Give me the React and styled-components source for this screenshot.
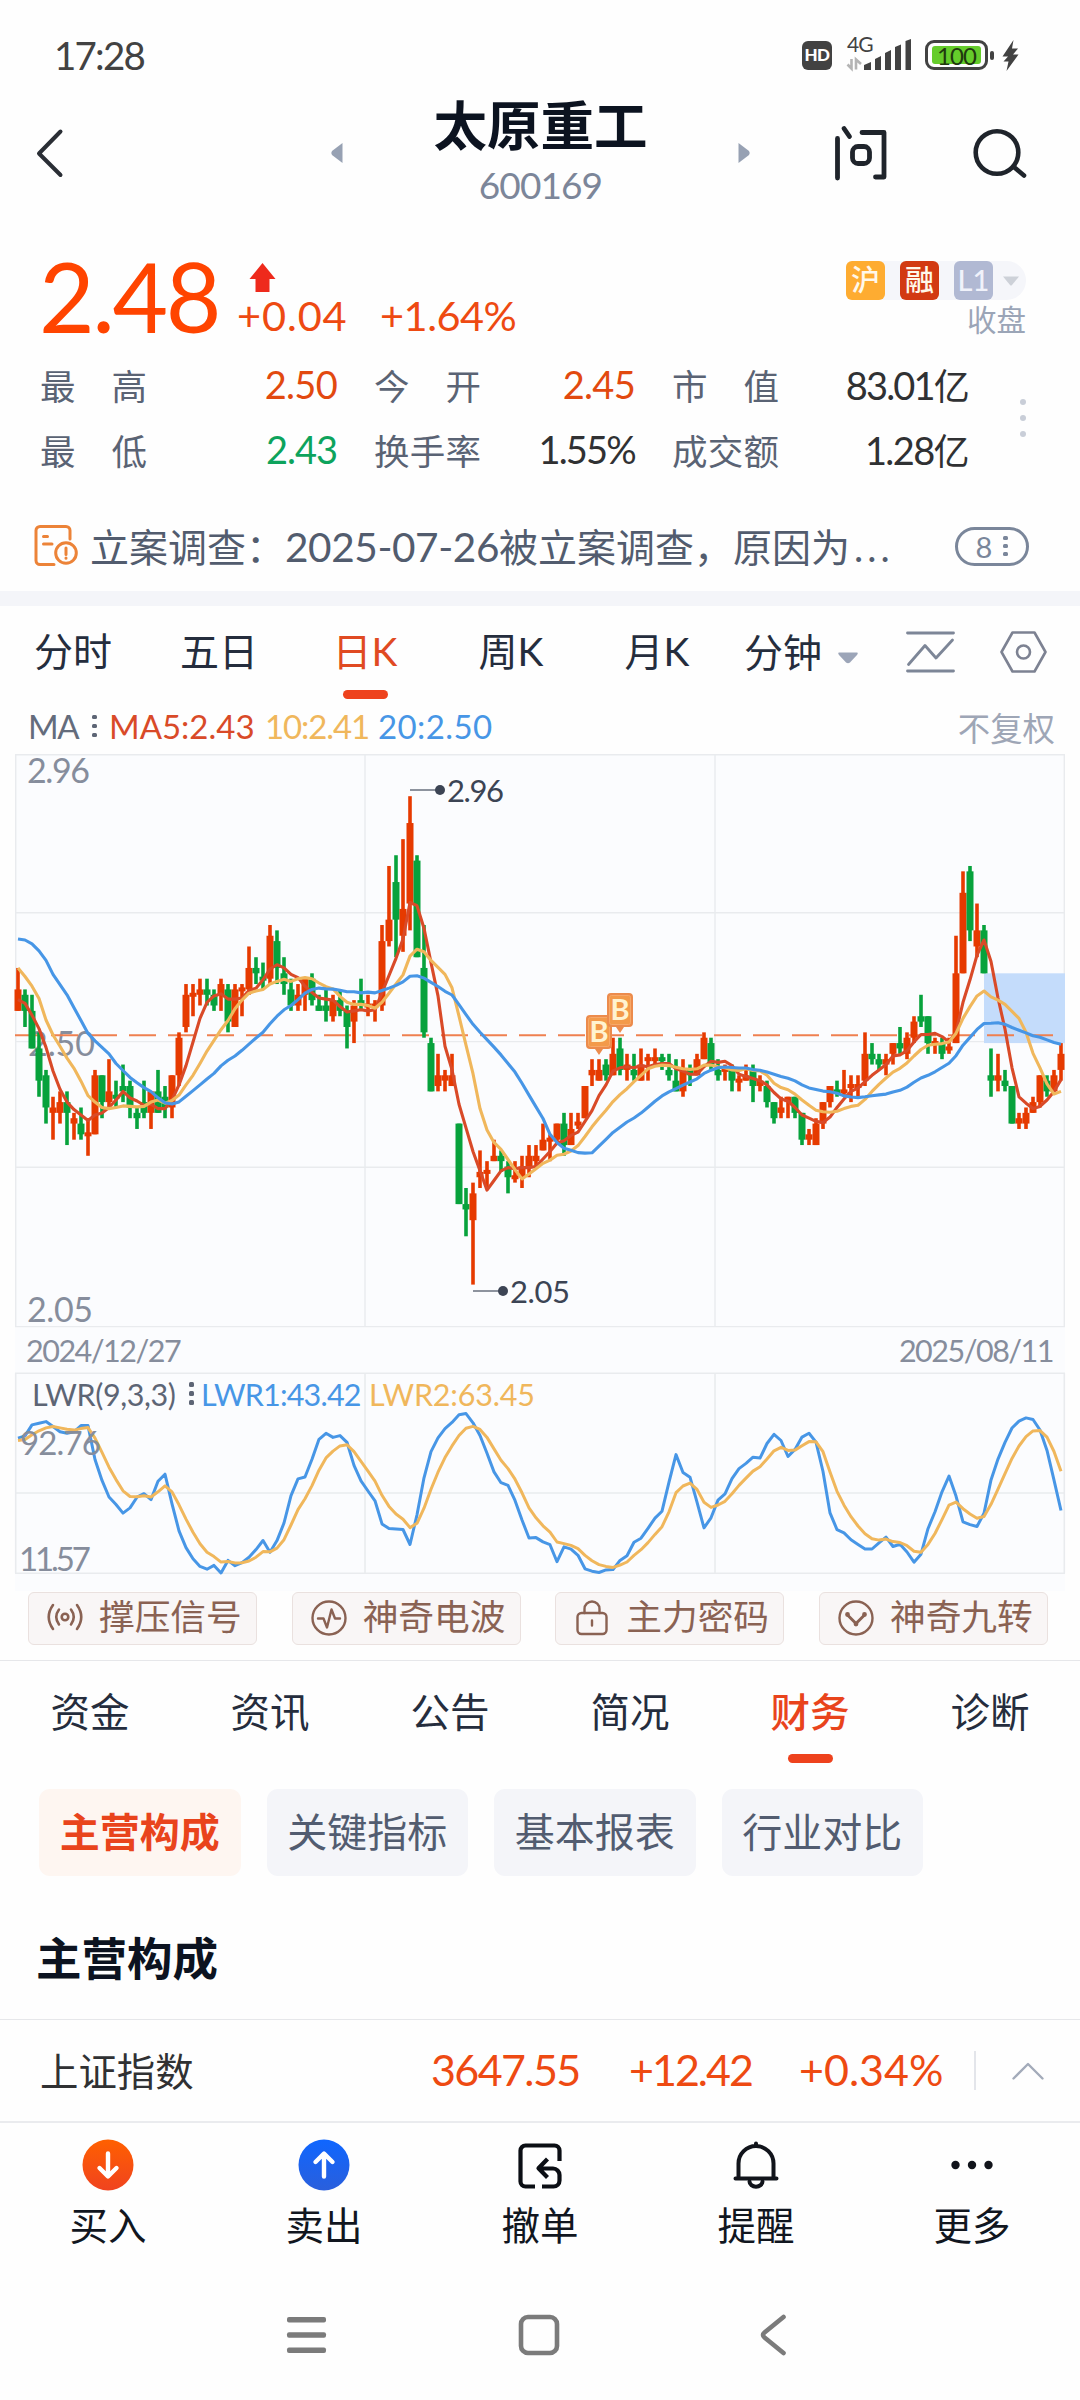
import React from 'react';
import styled, { createGlobalStyle, css } from 'styled-components';

const RED = '#e63a00';
const GREEN = '#07a23c';
const MA5_COLOR = '#d94a28';
const MA10_COLOR = '#f0b75c';
const MA20_COLOR = '#4796e6';

const GlobalStyle = createGlobalStyle`
  body {
    margin: 0;
    background: #fefefe;
    font-family: Lato, 'Noto Sans CJK SC', sans-serif;
  }

  * {
    box-sizing: border-box;
  }

  svg {
    display: block;
    flex: none;
    overflow: visible;
  }
`;

const Screen = styled.div`
  width: 1080px;
  height: 2400px;
  overflow: hidden;
  display: flex;
  flex-direction: column;
  background: #fefefe;
  white-space: nowrap;
`;

const Spacer = styled.div`
  flex: 1;
`;

const Num = styled.span`
  flex: none;
  width: ${(p) => (p.$w ? `${p.$w}px` : 'auto')};
  font-size: ${(p) => p.$size}px;
  letter-spacing: ${(p) => p.$ls || 0}px;
  color: ${(p) => p.$color || 'inherit'};
  margin-left: ${(p) => p.$ml || 0}px;
`;

/* ---------- status bar ---------- */

const StatusBar = styled.div`
  height: 90px;
  padding: 20px 61px 0 54px;
  display: flex;
  align-items: center;
  color: #424242;
`;

const HdBadge = styled.div`
  width: 30px;
  height: 29px;
  border-radius: 6px;
  background: #424242;
  color: #fff;
  font-size: 17px;
  font-weight: 900;
  line-height: 28px;
  letter-spacing: -0.5px;
  text-align: center;
`;

const Signal = styled.div`
  width: 64px;
  height: 36px;
  margin-left: 15px;
  position: relative;
  top: -2px;

  span {
    position: absolute;
    left: 0;
    top: 0;
    font-size: 21px;
    line-height: 18px;
    letter-spacing: -1px;
  }
`;

const Battery = styled.div`
  width: 63px;
  height: 30px;
  margin-left: 14px;
  padding: 3px;
  border: 3px solid #424242;
  border-radius: 9px;

  div {
    height: 18px;
    width: 49px;
    margin-left: 1px;
    border-radius: 3px;
    background: #65cc2b;
    color: #20380f;
    font-size: 24px;
    line-height: 19px;
    letter-spacing: -1px;
    text-align: center;
  }
`;

const BatteryCap = styled.div`
  width: 4px;
  height: 9px;
  margin: 0 8px 0 2px;
  border-radius: 2px;
  background: #424242;
`;

/* ---------- header ---------- */

const Header = styled.div`
  height: 125px;
  padding: 0 53px 0 35px;
  display: flex;
  align-items: center;
`;

const Switcher = styled.div`
  margin-left: 268px;
  display: flex;
  align-items: center;
`;

const TitleBlock = styled.div`
  width: 395px;
  padding-top: 2px;
  text-align: center;
`;

const StockName = styled.div`
  font-size: 53.5px;
  font-weight: 700;
  line-height: 62px;
  color: #0c1320;
`;

const StockCode = styled.div`
  font-size: 37px;
  line-height: 58px;
  letter-spacing: -0.9px;
  color: #7c8699;
`;

/* ---------- quote ---------- */

const Quote = styled.div`
  height: 138px;
  padding: 33px 54px 0 39px;
  display: flex;
`;

const Price = styled.div`
  width: 199px;
  font-size: 96px;
  line-height: 96px;
  letter-spacing: -2.4px;
  color: #ff4400;
`;

const Change = styled.div`
  padding-top: 15px;

  svg {
    margin-left: 11px;
  }

  div {
    margin-top: 2px;
    line-height: 40px;
    color: #ee4a12;
    display: flex;
  }
`;

const QuoteSide = styled.div`
  margin-left: auto;
  padding-top: 13px;
  text-align: right;
`;

const Tags = styled.div`
  width: 180px;
  height: 39px;
  border-radius: 6px 20px 20px 6px;
  background: #f5f6fa;
  display: flex;
  align-items: center;
  gap: 15px;
`;

const Tag = styled.div`
  width: 39px;
  height: 39px;
  border-radius: 6px;
  background: ${(p) => p.$bg};
  color: ${(p) => p.$fg || '#fff8ea'};
  font-size: 29px;
  font-weight: 500;
  line-height: 38px;
  text-align: center;
`;

const MarketState = styled.div`
  font-size: 29.5px;
  line-height: 39px;
  color: #9ba5b7;
`;

/* ---------- stats ---------- */

const Stats = styled.div`
  height: 130px;
  padding-left: 40px;
  display: flex;
  align-items: center;
`;

const StatGrid = styled.div`
  display: grid;
  grid-template-columns: 297px 261px 296px;
  grid-auto-rows: 65px;
  column-gap: 37px;
`;

const Stat = styled.div`
  padding-bottom: 3px;
  display: flex;
  align-items: center;
  justify-content: space-between;
`;

const StatLabel = styled.div`
  width: 107px;
  font-size: 35.5px;
  text-align-last: justify;
  color: #5a6374;
`;

const StatValue = styled.div`
  font-size: 38px;
  letter-spacing: ${(p) => p.$ls}px;
  color: ${(p) => p.$color || '#303133'};

  small {
    font-size: 36px;
  }
`;

const MoreDots = styled.div`
  margin-left: 52px;
  display: flex;
  flex-direction: column;
  gap: 10px;

  i {
    width: 6px;
    height: 6px;
    border-radius: 50%;
    background: #c9ced8;
  }
`;

/* ---------- notice ---------- */

const Notice = styled.div`
  height: 108px;
  padding: 18px 51px 0 34px;
  display: flex;
  align-items: center;
  font-size: 39px;
  color: #525c6e;
`;

const NoticeText = styled.div`
  margin-left: 12px;
  padding-bottom: 3px;
`;

const CountPill = styled.div`
  width: 74px;
  height: 39px;
  margin-left: auto;
  border: 3px solid #7a869a;
  border-radius: 20px;
  display: flex;
  align-items: center;
  justify-content: center;
  gap: 11px;
  font-size: 29px;
  color: #7a869a;
`;

const Band = styled.div`
  height: 15px;
  background: #f4f5f9;
`;

const Dots = styled.div`
  width: ${(p) => p.$w || 5}px;
  display: flex;
  flex-direction: column;
  gap: ${(p) => p.$gap || 4.5}px;

  i {
    width: 4.5px;
    height: 4.5px;
    border-radius: 1.5px;
    background: ${(p) => p.$color};
  }
`;

/* ---------- period tabs ---------- */

const underline = css`
  &::after {
    content: '';
    position: absolute;
    left: calc(50% - 22px);
    bottom: ${(p) => p.$bottom}px;
    width: 45px;
    height: 9px;
    border-radius: 5px;
    background: #ee421d;
  }
`;

const PeriodTabs = styled.div`
  height: 98px;
  padding-right: 33px;
  display: flex;
  color: #252d3d;
  font-size: 39px;
  line-height: 91px;
`;

const PeriodTab = styled.div`
  width: 146px;
  height: 98px;
  position: relative;
  text-align: center;
  ${(p) => p.$active && 'color: #e04a22;'}
  ${(p) => p.$active && underline}
`;

const MinuteTab = styled.div`
  width: 176px;
  padding-left: 14px;
  display: flex;
  align-items: center;
  height: 92px;

  svg {
    margin: 11px 0 0 16px;
  }
`;

const TabIcons = styled.div`
  height: 92px;
  display: flex;
  align-items: center;
  gap: 45px;
`;

/* ---------- charts ---------- */

const MaLegend = styled.div`
  height: 50px;
  padding: 0 25px 6px 28px;
  display: flex;
  align-items: center;
  color: #646c7c;
`;

const Adjust = styled.div`
  margin-left: auto;
  font-size: 32.4px;
  color: #9ea6b6;
`;

const ChartPanel = styled.div`
  width: 1050px;
  margin-left: 15px;
  background: #fbfcfe;
`;

const DateRow = styled.div`
  height: 46px;
  padding: 0 12px 1px 11px;
  display: flex;
  align-items: center;
  justify-content: space-between;
  font-size: 30.5px;
  letter-spacing: -1.5px;
  color: #868d9c;
`;

const LwrBox = styled.div`
  position: relative;
`;

const LwrLegend = styled.div`
  position: absolute;
  left: 17px;
  top: 0;
  height: 41px;
  display: flex;
  align-items: center;
`;

/* ---------- signal buttons ---------- */

const SignalRow = styled.div`
  height: 69px;
  padding: 1px 32px 0 28px;
  display: flex;
  justify-content: space-between;
  align-items: flex-start;
`;

const SignalButton = styled.div`
  width: 229px;
  height: 53px;
  padding: 0 0 1px 18px;
  border: 1.5px solid #eae1df;
  border-radius: 6px;
  background: #f9f6f6;
  display: flex;
  align-items: center;
  gap: 16px;
  font-size: 35.7px;
  line-height: 46px;
  color: #8a6253;

  span {
    padding-bottom: 2px;
  }
`;

/* ---------- section tabs ---------- */

const SectionTabs = styled.div`
  height: 129px;
  border-top: 1px solid #e6e7ea;
  display: flex;
  font-size: 39.5px;
  line-height: 101px;
  color: #252d3d;
`;

const SectionTab = styled.div`
  width: 180px;
  height: 128px;
  position: relative;
  text-align: center;
  ${(p) => p.$active && 'color: #e9441c; font-weight: 500;'}
  ${(p) => p.$active && underline}
`;

const Chips = styled.div`
  padding-left: 39px;
  display: flex;
  gap: 26px;
`;

const Chip = styled.div`
  width: 201.5px;
  height: 87px;
  border-radius: 11px;
  background: ${(p) => (p.$active ? '#fef6f1' : '#f4f5f9')};
  color: ${(p) => (p.$active ? '#e9441c' : '#525c70')};
  font-weight: ${(p) => (p.$active ? 700 : 400)};
  font-size: 40px;
  line-height: 87px;
  text-align: center;
`;

const SectionTitle = styled.div`
  height: 143px;
  padding: 48px 0 0 36px;
  font-size: 45.5px;
  font-weight: 700;
  line-height: 70px;
  color: #0c1320;
`;

/* ---------- index bar and bottom bars ---------- */

const IndexBar = styled.div`
  height: 102px;
  border-top: 1px solid #e6e7ea;
  padding: 0 36px 0 40px;
  display: flex;
  align-items: center;
  font-size: 38.4px;
  color: #303133;
`;

const IndexName = styled.div`
  padding-bottom: 4px;
`;

const IndexNumbers = styled.div`
  margin-left: auto;
  padding-bottom: 3px;
  display: flex;
  font-size: 43px;
  color: #ee4a12;
`;

const IndexNum = styled.div`
  width: ${(p) => p.$w}px;
  letter-spacing: ${(p) => p.$ls}px;
`;

const IndexDivider = styled.div`
  width: 2px;
  height: 39px;
  margin-right: 36px;
  background: #e3e5ea;
`;

const ActionBar = styled.div`
  height: 148px;
  border-top: 2px solid #eaebee;
  display: flex;
`;

const Action = styled.div`
  width: 216px;
  padding-top: 16px;
  display: flex;
  flex-direction: column;
  align-items: center;
  font-size: 38.5px;
  line-height: 68px;
  color: #11161f;
`;

const SystemNav = styled.div`
  height: 131px;
  display: flex;
  align-items: center;
  padding-left: 287px;
`;

/* ---------- data ---------- */

// one trading day: [high, body top, body bottom, low, up], prices in fen
const DAYS = [
  [264, 260, 256, 256, 1], [260, 259, 256, 253, 0], [259, 256, 249, 249, 0], [252, 249, 243, 240, 0], [245, 244, 238, 235, 0],
  [240, 238, 237, 232, 1], [241, 239, 237, 235, 1], [241, 239, 237, 231, 0], [237, 236, 235, 232, 1], [238, 235, 233, 232, 0],
  [236, 233, 233, 229, 1], [245, 244, 233, 233, 1], [244, 244, 239, 236, 0], [247, 241, 239, 238, 1], [243, 240, 240, 238, 0],
  [246, 242, 241, 239, 0], [243, 242, 238, 236, 0], [238, 237, 236, 234, 0], [243, 239, 237, 236, 0], [241, 241, 237, 234, 1],
  [245, 241, 237, 237, 0], [242, 240, 238, 236, 0], [244, 244, 238, 236, 1], [252, 251, 244, 242, 1], [261, 259, 253, 252, 1],
  [261, 259, 259, 255, 1], [262, 260, 259, 257, 1], [262, 260, 259, 257, 0], [260, 259, 257, 256, 0], [262, 261, 259, 256, 1],
  [261, 260, 254, 252, 0], [261, 260, 253, 253, 1], [261, 260, 260, 255, 1], [268, 264, 260, 259, 1], [266, 264, 263, 261, 0],
  [265, 262, 262, 260, 0], [272, 270, 262, 261, 1], [271, 269, 264, 261, 0], [266, 263, 261, 259, 0], [262, 260, 257, 256, 0],
  [261, 259, 257, 256, 1], [262, 262, 259, 256, 1], [263, 262, 258, 257, 0], [259, 257, 256, 256, 0], [260, 257, 256, 254, 0],
  [259, 258, 255, 254, 1], [260, 258, 256, 255, 0], [257, 256, 253, 249, 0], [258, 257, 254, 250, 1], [262, 258, 257, 256, 0],
  [259, 257, 257, 255, 1], [258, 257, 257, 254, 1], [272, 269, 257, 256, 1], [283, 273, 269, 268, 1], [285, 280, 273, 266, 0],
  [288, 275, 270, 267, 1], [296, 291, 276, 271, 1], [285, 284, 266, 266, 0], [272, 264, 252, 251, 0], [251, 250, 241, 241, 0],
  [248, 244, 242, 241, 1], [245, 244, 243, 241, 1], [248, 244, 242, 242, 1], [235, 235, 220, 220, 0], [223, 220, 219, 214, 0],
  [224, 222, 217, 205, 1], [230, 226, 225, 223, 1], [228, 226, 226, 223, 1], [232, 229, 228, 228, 1], [230, 229, 228, 226, 0],
  [228, 227, 225, 222, 0], [228, 225, 225, 224, 1], [229, 227, 225, 223, 1], [231, 229, 227, 225, 1], [231, 229, 228, 227, 1],
  [235, 232, 230, 230, 1], [233, 232, 232, 228, 1], [235, 235, 232, 231, 1], [237, 235, 231, 229, 0], [237, 234, 231, 231, 1],
  [237, 235, 235, 234, 1], [242, 242, 236, 236, 1], [247, 245, 244, 242, 1], [247, 245, 243, 243, 1], [247, 246, 244, 243, 0],
  [251, 248, 244, 244, 1], [251, 249, 245, 244, 0], [248, 246, 245, 243, 1], [248, 245, 244, 243, 0], [249, 246, 243, 243, 1],
  [248, 247, 247, 243, 1], [249, 247, 247, 246, 1], [248, 247, 247, 245, 0], [248, 245, 244, 243, 0], [247, 243, 241, 241, 0],
  [247, 245, 241, 240, 1], [246, 245, 244, 242, 0], [248, 247, 244, 244, 1], [252, 251, 247, 247, 1], [251, 250, 246, 245, 0],
  [247, 245, 244, 243, 0], [246, 245, 245, 243, 1], [246, 245, 243, 241, 0], [244, 243, 243, 241, 1], [246, 244, 243, 243, 1],
  [246, 245, 242, 239, 0], [244, 243, 242, 241, 1], [243, 242, 239, 238, 0], [239, 239, 236, 235, 0], [240, 238, 237, 236, 1],
  [240, 240, 239, 236, 1], [240, 240, 237, 236, 0], [237, 237, 232, 231, 0], [234, 233, 232, 231, 1], [236, 235, 231, 231, 1],
  [239, 239, 235, 234, 1], [242, 242, 239, 238, 1], [243, 241, 241, 240, 0], [245, 241, 241, 240, 1], [244, 242, 242, 239, 1],
  [244, 242, 242, 240, 1], [252, 248, 243, 242, 1], [250, 248, 247, 246, 0], [248, 247, 246, 245, 0], [248, 247, 246, 244, 1],
  [250, 250, 248, 246, 1], [253, 250, 249, 248, 0], [252, 251, 248, 247, 1], [255, 254, 251, 250, 1], [259, 255, 254, 253, 0],
  [255, 255, 250, 248, 0], [251, 250, 250, 248, 1], [251, 250, 248, 247, 0], [251, 249, 249, 248, 1], [270, 263, 250, 250, 1],
  [282, 278, 263, 263, 1], [283, 282, 271, 269, 0], [276, 271, 268, 266, 1], [272, 271, 263, 263, 0], [249, 244, 243, 240, 0],
  [248, 244, 243, 241, 1], [245, 243, 242, 241, 0], [242, 242, 235, 235, 0], [237, 236, 235, 234, 1], [238, 237, 235, 234, 1],
  [240, 239, 237, 237, 1], [244, 244, 239, 238, 1], [244, 243, 241, 240, 0], [245, 244, 241, 241, 1], [250, 248, 245, 243, 1]
];

// averages of the first days reach back before the visible range
const MA5_HEAD = [258.1, 257.4, 255.2, 252.7];
const MA10_HEAD = [264, 262.4, 260.6, 258.3, 254.3, 251.5, 249.4, 247.2, 245.3];
const MA20_HEAD = [
  269.4, 269.2, 268.5, 267.2, 265.4, 262.8, 260.9, 259, 256.6, 254.2, 251.8, 250.4, 249.2, 248, 246.2, 244.9, 243.6, 242.6, 241.7
];
const LWR1_HEAD = [80.3, 81.4, 87, 87.9, 88.7, 86.2, 83.5, 82.8];
const LWR2_HEAD = [79.1, 79.6, 82, 84, 85.5, 86.2, 85.5, 84.8];

const closes = DAYS.map(([, top, bottom, , up]) => (up ? top : bottom));

const movingAverage = (n, head) =>
  closes.map((_, i) => {
    if (i < head.length) return head[i];
    return closes.slice(i - n + 1, i + 1).reduce((a, b) => a + b, 0) / n;
  });

const lwr1 = [...LWR1_HEAD];
const lwr2 = [...LWR2_HEAD];
for (let i = 8; i < DAYS.length; i++) {
  const range = DAYS.slice(i - 8, i + 1);
  const high = Math.max(...range.map((d) => d[0]));
  const low = Math.min(...range.map((d) => d[3]));
  const rsv = ((high - closes[i]) / (high - low)) * 100;
  lwr1[i] = (lwr1[i - 1] * 2 + rsv) / 3;
  lwr2[i] = (lwr2[i - 1] * 2 + lwr1[i]) / 3;
}

const dayX = (i) => 3 + i * 7;
const priceY = (p) => 42.2 + (296 - p) * 5.367;
const lwrY = (v) => 200 - (v - 11.57) * 1.963;
const toPoints = (values, scale) => values.map((v, i) => `${dayX(i)},${scale(v).toFixed(1)}`).join(' ');

const STATS = [
  { label: '最高', value: '2.50', color: '#e2490f', ls: -0.7 },
  { label: '今开', value: '2.45', color: '#e2490f', ls: -0.7 },
  { label: '市值', value: '83.01', unit: '亿', ls: -1.8 },
  { label: '最低', value: '2.43', color: '#0da35c', ls: -1 },
  { label: '换手率', value: '1.55%', ls: -1.8 },
  { label: '成交额', value: '1.28', unit: '亿', ls: -1.6 }
];

/* ---------- pieces ---------- */

const GRID = '#e9ebee';

const ChartText = ({ x, y, w, size = 34, fill = '#868d9c', children }) => (
  <text x={x} y={y} fontSize={size} fill={fill} textLength={w}>
    {children}
  </text>
);

const BuyMark = ({ x, y }) => (
  <g transform={`translate(${x} ${y})`}>
    <path d="M4 0H22a4 4 0 0 1 4 4V30a4 4 0 0 1-4 4H17l-4 6-4-6H4a4 4 0 0 1-4-4V4a4 4 0 0 1 4-4z" fill="#ec8b4c" />
    <rect x="2.5" y="2.5" width="21" height="29" rx="2" fill="#f39a4a" stroke="#f7a869" />
    <text x="13" y="27" fontSize="29" fontWeight="700" textAnchor="middle" fill="#fff3d0">
      B
    </text>
  </g>
);

const KLine = () => (
  <svg width="1050" height="573">
    <g stroke={GRID} strokeWidth="1.4">
      <path d="M0.7 573V0.7H1049.3V573M0 158.7H1050M0 287.6H1050M0 413.2H1050M0 572.6H1050" fill="none" />
      <path d="M350 1V573M700 1V573" />
    </g>
    <rect x="969" y={priceY(263)} width="81" height={priceY(250) - priceY(263)} fill="#c4dcfb" />
    <ChartText x="12" y="29" w="63">2.96</ChartText>
    <ChartText x="13" y="302" w="67">2.50</ChartText>
    <ChartText x="12" y="568" w="66">2.05</ChartText>
    <path d="M0 281.2H1038" stroke="#ef8050" strokeWidth="2" strokeDasharray="27 12" strokeDashoffset="3" />
    {DAYS.map(([high, top, bottom, low, up], i) => {
      const x = dayX(i);
      const height = Math.max(priceY(bottom) - priceY(top), 4);
      const y = top === bottom ? priceY(top) - 2 : priceY(top);
      return (
        <g key={i} fill={up ? RED : GREEN}>
          <rect x={x - 1.8} y={priceY(high)} width="3.6" height={priceY(low) - priceY(high)} />
          <rect x={x - 3.5} y={y} width="7" height={height} />
        </g>
      );
    })}
    <g fill="none" strokeWidth="3.1" strokeLinejoin="round">
      <polyline points={toPoints(movingAverage(5, MA5_HEAD), priceY)} stroke={MA5_COLOR} />
      <polyline points={toPoints(movingAverage(10, MA10_HEAD), priceY)} stroke={MA10_COLOR} />
      <polyline points={toPoints(movingAverage(20, MA20_HEAD), priceY)} stroke={MA20_COLOR} />
    </g>
    <BuyMark x={571} y={261} />
    <BuyMark x={592} y={239} />
    <path d="M395 36H425M458 537H488" stroke="#8d939e" strokeWidth="1.8" />
    <circle cx="425" cy="36" r="5" fill="#3c4454" />
    <circle cx="488" cy="537" r="5" fill="#3c4454" />
    <ChartText x="432" y="48" w="57" size={31} fill="#3c4454">2.96</ChartText>
    <ChartText x="495" y="549" w="60" size={31} fill="#3c4454">2.05</ChartText>
  </svg>
);

const Lwr = () => (
  <LwrBox>
    <svg width="1050" height="218">
      <path
        d="M0.7 0V200.3M1049.3 0V200.3M0 0.3H1050M0 120H1050M0 200.3H1050M350 0V200M700 0V200"
        fill="none"
        stroke={GRID}
        strokeWidth="1.6"
      />
      <g fill="none" strokeWidth="3" strokeLinejoin="round">
        <polyline points={toPoints(lwr1, lwrY)} stroke={MA20_COLOR} />
        <polyline points={toPoints(lwr2, lwrY)} stroke={MA10_COLOR} />
      </g>
      <ChartText x="5" y="82" w="81" size={33}>92.76</ChartText>
      <ChartText x="4" y="198" w="72" size={33}>11.57</ChartText>
    </svg>
    <LwrLegend>
      <Num $size={30.5} $ls={-0.4} $w={157} $color="#5d6575">LWR(9,3,3)</Num>
      <Dots $color="#5d6575" $w={12}>
        <i /><i /><i />
      </Dots>
      <Num $size={30.5} $ls={-0.8} $w={168} $color={MA20_COLOR}>LWR1:43.42</Num>
      <Num $size={30.5} $ls={-0.2} $color={MA10_COLOR}>LWR2:63.45</Num>
    </LwrLegend>
  </LwrBox>
);

const strokeProps = { fill: 'none', strokeLinecap: 'round', strokeLinejoin: 'round' };

const SIGNALS = [
  {
    text: '撑压信号',
    icon: (
      <svg width="36" height="36" viewBox="0 0 36 36" {...strokeProps} stroke="#8a6253" strokeWidth="2.6">
        <circle cx="18" cy="17" r="3.3" />
        <path d="M12 9.5q-5.5 7.5 0 15M24 9.5q5.5 7.5 0 15M6 5q-8.500 12 0 24M30 5q8.500 12 0 24" />
      </svg>
    )
  },
  {
    text: '神奇电波',
    icon: (
      <svg width="36" height="36" viewBox="0 0 36 36" {...strokeProps} stroke="#8a6253" strokeWidth="2.4">
        <circle cx="18" cy="18" r="16.5" />
        <path d="M7 18.5H12.5L16 27.5L20.5 9.5L24 18.5H29" />
      </svg>
    )
  },
  {
    text: '主力密码',
    icon: (
      <svg width="36" height="36" viewBox="0 0 36 36" {...strokeProps} stroke="#8a6253" strokeWidth="2.4">
        <rect x="3.5" y="13" width="29" height="21" rx="4" />
        <path d="M10.5 13V9a7.5 7.5 0 0 1 15 0V13M18 20.5V25.5" />
      </svg>
    )
  },
  {
    text: '神奇九转',
    icon: (
      <svg width="36" height="36" viewBox="0 0 36 36" {...strokeProps} stroke="#8a6253" strokeWidth="2.4">
        <circle cx="18" cy="18" r="16.5" />
        <path d="M9.5 15L18 23.5L26.5 15" strokeWidth="3" />
        <circle cx="9.5" cy="14.5" r="1.2" />
        <circle cx="18" cy="24" r="1.2" />
        <circle cx="26.5" cy="14.5" r="1.2" />
      </svg>
    )
  }
];

const RoundArrow = ({ id, from, to, d }) => (
  <svg width="52" height="52" viewBox="0 0 52 52">
    <linearGradient id={id} x1="0" y1="0" x2="0" y2="1">
      <stop offset="0" stopColor={from} />
      <stop offset="1" stopColor={to} />
    </linearGradient>
    <circle cx="26" cy="26" r="25.5" fill={`url(#${id})`} />
    <path d={d} {...strokeProps} stroke="#fff" strokeWidth="4.4" />
  </svg>
);

const ACTIONS = [
  { text: '买入', icon: <RoundArrow id="buy" from="#ff6000" to="#f0431f" d="M26 14.5V37M17.5 29L26 37.5L34.5 29" /> },
  { text: '卖出', icon: <RoundArrow id="sell" from="#0f66ff" to="#2a5fdc" d="M26 37.5V15M17.5 23L26 14.5L34.5 23" /> },
  {
    text: '撤单',
    icon: (
      <svg width="52" height="52" viewBox="0 0 52 52" {...strokeProps} strokeLinecap="butt" stroke="#0b0e14" strokeWidth="4.2">
        <path d="M45.5 22V11.5a5 5 0 0 0-5-5H11.5a5 5 0 0 0-5 5V42.500a5 5 0 0 0 5 5H21" />
        <path d="M25.5 29.5H39a6.5 6.5 0 0 1 6.5 6.5v5.5a6 6 0 0 1-6 6H28M33.5 20L24.5 29.3L33.5 38.5" />
      </svg>
    )
  },
  {
    text: '提醒',
    icon: (
      <svg width="52" height="52" viewBox="0 0 52 52" {...strokeProps} stroke="#11141b" strokeWidth="4">
        <path d="M8.5 39V24.5a17.5 17.5 0 0 1 35 0V39M5.5 39.5H46.5M26 4.5V6.5" />
        <path d="M19.5 42.5a6.5 5.2 0 0 0 13 0" />
      </svg>
    )
  },
  {
    text: '更多',
    icon: (
      <svg width="52" height="52" viewBox="0 0 52 52" fill="#11141b">
        <circle cx="9.5" cy="26" r="4.2" />
        <circle cx="26" cy="26" r="4.2" />
        <circle cx="42.5" cy="26" r="4.2" />
      </svg>
    )
  }
];

const App = () => (
  <Screen>
    <GlobalStyle />
    <StatusBar>
      <Num $size={38.5} $ls={-1.8}>17:28</Num>
      <Spacer />
      <HdBadge>HD</HdBadge>
      <Signal>
        <span>4G</span>
        <svg width="64" height="36" viewBox="0 0 64 36">
          <path d="M17 35V30L24 27V35zM28 35V24L34 21V35zM38 35V18L44 15V35zM48 35V12L54 9.5V35zM58.5 35V6L64 4V35z" fill="#424242" />
          <path d="M4.5 24V33.5L0.5 29.5M9 34.5V24.5L14 29" fill="none" stroke="#b4b4b4" strokeWidth="2.6" />
        </svg>
      </Signal>
      <Battery>
        <div>100</div>
      </Battery>
      <BatteryCap />
      <svg width="17" height="31" viewBox="0 0 17 31" fill="#424242">
        <path d="M11.5 0L0.5 16.5H6L1.5 21.5H6.5L4.5 31L16.5 14.5H11L16 8.5H10z" />
      </svg>
    </StatusBar>

    <Header>
      <svg width="28" height="50" viewBox="0 0 28 50" {...strokeProps} stroke="#2a2e35" strokeWidth="4">
        <path d="M25.5 3.5L4 25.5L25.5 47" />
      </svg>
      <Switcher>
        <svg width="12" height="20" viewBox="0 0 12 20" fill="#97a1b3">
          <path d="M11.5 0V20L1 12Q-0.500 10 1 8z" />
        </svg>
        <TitleBlock>
          <StockName>太原重工</StockName>
          <StockCode>600169</StockCode>
        </TitleBlock>
        <svg width="12" height="20" viewBox="0 0 12 20" fill="#97a1b3">
          <path d="M0.5 0V20L11 12Q12.5 10 11 8z" />
        </svg>
      </Switcher>
      <Spacer />
      <svg width="52" height="56" viewBox="0 0 52 56" {...strokeProps} stroke="#1f242b" strokeWidth="4.8">
        <path d="M2.5 13.5V53M9 3.5L14.5 11.5M27 7.5H49V52H40.5" />
        <rect x="17.5" y="21.5" width="17" height="17" rx="5.5" />
      </svg>
      <Num as="svg" $ml={86} width="54" height="50" viewBox="0 0 54 50" {...strokeProps} stroke="#1f242b" strokeWidth="4.6">
        <circle cx="24" cy="24.5" r="21.3" />
        <path d="M41.5 39.5L51 47.5" />
      </Num>
    </Header>

    <Quote>
      <Price>2.48</Price>
      <Change>
        <svg width="27" height="30" viewBox="0 0 27 30" fill="#ee2a1c">
          <path d="M13.5 0L26.5 16H20.5V29H6.5V16H0.5z" />
        </svg>
        <div>
          <Num $size={41.5} $ls={0.9} $w={143} $ml={-1}>+0.04</Num>
          <Num $size={41.5} $ls={-0.5}>+1.64%</Num>
        </div>
      </Change>
      <QuoteSide>
        <Tags>
          <Tag $bg="#feac31">沪</Tag>
          <Tag $bg="#d23a12">融</Tag>
          <Tag $bg="#b1b9d3" $fg="#f0f2fa">L1</Tag>
          <Num as="svg" $ml={-5} width="16" height="10" viewBox="0 0 16 10" fill="#cdd1d8">
            <path d="M0 0.5H16L9 9Q8 10 7 9z" />
          </Num>
        </Tags>
        <MarketState>收盘</MarketState>
      </QuoteSide>
    </Quote>

    <Stats>
      <StatGrid>
        {STATS.map(({ label, value, unit, color, ls }) => (
          <Stat key={label}>
            <StatLabel>{label}</StatLabel>
            <StatValue $color={color} $ls={ls}>
              {value}
              {unit && <small>{unit}</small>}
            </StatValue>
          </Stat>
        ))}
      </StatGrid>
      <MoreDots>
        <i /><i /><i />
      </MoreDots>
    </Stats>

    <Notice>
      <svg width="44" height="42" viewBox="0 0 44 42" {...strokeProps} stroke="#ec8338" strokeWidth="3">
        <path d="M20 39.5H6a4 4 0 0 1-4-4V5.5a4 4 0 0 1 4-4H32a4 4 0 0 1 4 4V14M9.5 11.5H13.5M9.5 19H18" />
        <circle cx="32" cy="28" r="10.3" />
        <path d="M32 23V29.5M32 33V33.2" />
      </svg>
      <NoticeText>
        立案调查：
        <Num $size={40.5} $ls={-0.4}>2025-07-26</Num>
        被立案调查，原因为
        <Num $size={39} $ls={4} $ml={4}>...</Num>
      </NoticeText>
      <CountPill>
        8
        <Dots $color="#7a869a" $gap={3.5}>
          <i /><i /><i />
        </Dots>
      </CountPill>
    </Notice>
    <Band />

    <PeriodTabs>
      {['分时', '五日', '日K', '周K', '月K'].map((name) => (
        <PeriodTab key={name} $active={name === '日K'} $bottom={5}>
          {name}
        </PeriodTab>
      ))}
      <MinuteTab>
        分钟
        <svg width="20" height="12" viewBox="0 0 20 12" fill="#9ca5b8">
          <path d="M1 0.5H19Q20.5 1 19 3L12 10.5Q10 12 8 10.5L1 3Q-0.500 1 1 0.5z" />
        </svg>
      </MinuteTab>
      <TabIcons>
        <svg width="49" height="42" viewBox="0 0 49 42" {...strokeProps} stroke="#7d8697" strokeWidth="2.8">
          <path d="M1.5 2H47.5M1.5 40H47.5M2.5 33.5L19 14.5L30 27L46.5 9" />
        </svg>
        <svg width="47" height="42" viewBox="0 0 47 42" {...strokeProps} stroke="#7d8292" strokeWidth="2.6">
          <path d="M12.5 1.5H34.5L45.5 21L34.5 40.5H12.5L1.5 21z" />
          <circle cx="23.5" cy="21" r="6.5" />
        </svg>
      </TabIcons>
    </PeriodTabs>

    <MaLegend>
      <Num $size={33} $ls={-1.5} $w={64}>MA</Num>
      <Dots $color="#5d6575" $w={17}>
        <i /><i /><i />
      </Dots>
      <Num $size={33} $ls={0} $w={156} $color={MA5_COLOR}>MA5:2.43</Num>
      <Num $size={33} $ls={-1.1} $w={113} $color={MA10_COLOR}>10:2.41</Num>
      <Num $size={33} $ls={0.4} $color={MA20_COLOR}>20:2.50</Num>
      <Adjust>不复权</Adjust>
    </MaLegend>
    <ChartPanel>
      <KLine />
      <DateRow>
        <span>2024/12/27</span>
        <span>2025/08/11</span>
      </DateRow>
      <Lwr />
    </ChartPanel>

    <SignalRow>
      {SIGNALS.map(({ text, icon }) => (
        <SignalButton key={text}>
          {icon}
          <span>{text}</span>
        </SignalButton>
      ))}
    </SignalRow>

    <SectionTabs>
      {['资金', '资讯', '公告', '简况', '财务', '诊断'].map((name) => (
        <SectionTab key={name} $active={name === '财务'} $bottom={26}>
          {name}
        </SectionTab>
      ))}
    </SectionTabs>
    <Chips>
      {['主营构成', '关键指标', '基本报表', '行业对比'].map((name, i) => (
        <Chip key={name} $active={i === 0}>
          {name}
        </Chip>
      ))}
    </Chips>
    <SectionTitle>主营构成</SectionTitle>

    <IndexBar>
      <IndexName>上证指数</IndexName>
      <IndexNumbers>
        <IndexNum $w={198} $ls={-1.6}>3647.55</IndexNum>
        <IndexNum $w={170} $ls={-2}>+12.42</IndexNum>
        <IndexNum $w={175} $ls={0}>+0.34%</IndexNum>
      </IndexNumbers>
      <IndexDivider />
      <svg width="32" height="18" viewBox="0 0 32 18" {...strokeProps} stroke="#a3abba" strokeWidth="2.4">
        <path d="M1.5 16.5L16 2L30.5 16.5" />
      </svg>
    </IndexBar>
    <ActionBar>
      {ACTIONS.map(({ text, icon }) => (
        <Action key={text}>
          {icon}
          {text}
        </Action>
      ))}
    </ActionBar>
    <SystemNav>
      <svg width="39" height="38" viewBox="0 0 39 38" fill="#7b7b7b">
        <rect y="1" width="39" height="5.5" rx="2" />
        <rect y="16.2" width="39" height="5.5" rx="2" />
        <rect y="31.5" width="39" height="5.5" rx="2" />
      </svg>
      <Num as="svg" $ml={192} width="42" height="42" viewBox="0 0 42 42" fill="none" stroke="#7b7b7b" strokeWidth="4.6">
        <rect x="3" y="3" width="36" height="36" rx="7" />
      </Num>
      <Num as="svg" $ml={199} width="28" height="42" viewBox="0 0 28 42" {...strokeProps} stroke="#7b7b7b" strokeWidth="4.6">
        <path d="M24.5 3L5.5 18.5Q2.5 21 5.5 23.5L24.5 39" />
      </Num>
    </SystemNav>
  </Screen>
);

export default App;
